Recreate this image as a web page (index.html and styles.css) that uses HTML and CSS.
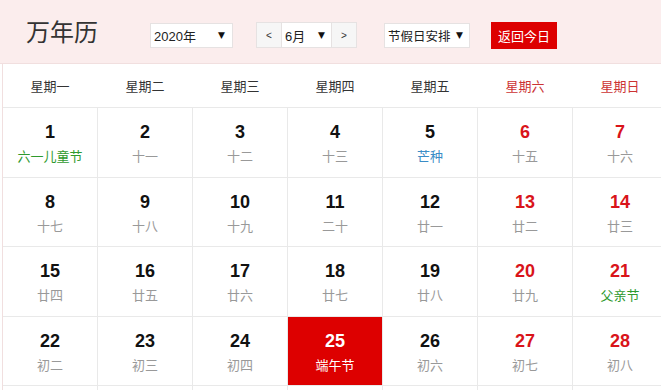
FILE: index.html
```html
<!DOCTYPE html>
<html lang="zh">
<head>
    <meta charset="UTF-8">
    <meta name="viewport" content="width=device-width, initial-scale=1.0">
    <title>万年历</title>
    <link rel="stylesheet" href="styles.css">
</head>
<body>
    <div class="calendar">
        <div class="toolbar">
            <h1 class="title">万年历</h1>
            <div class="select year-select"><span>2020年</span><span class="caret">▼</span></div>
            <div class="month-nav">
                <span class="nav-btn">&lt;</span>
                <div class="select month-select"><span>6月</span><span class="caret">▼</span></div>
                <span class="nav-btn">&gt;</span>
            </div>
            <div class="select holiday-select"><span>节假日安排</span><span class="caret">▼</span></div>
            <button class="today-btn">返回今日</button>
        </div>

        <div class="weekdays">
            <div class="weekday">星期一</div>
            <div class="weekday">星期二</div>
            <div class="weekday">星期三</div>
            <div class="weekday">星期四</div>
            <div class="weekday">星期五</div>
            <div class="weekday weekend">星期六</div>
            <div class="weekday weekend">星期日</div>
        </div>

        <div class="days">
            <div class="day"><div class="num">1</div><div class="lunar festival">六一儿童节</div></div>
            <div class="day"><div class="num">2</div><div class="lunar">十一</div></div>
            <div class="day"><div class="num">3</div><div class="lunar">十二</div></div>
            <div class="day"><div class="num">4</div><div class="lunar">十三</div></div>
            <div class="day"><div class="num">5</div><div class="lunar term">芒种</div></div>
            <div class="day weekend"><div class="num">6</div><div class="lunar">十五</div></div>
            <div class="day weekend"><div class="num">7</div><div class="lunar">十六</div></div>

            <div class="day"><div class="num">8</div><div class="lunar">十七</div></div>
            <div class="day"><div class="num">9</div><div class="lunar">十八</div></div>
            <div class="day"><div class="num">10</div><div class="lunar">十九</div></div>
            <div class="day"><div class="num">11</div><div class="lunar">二十</div></div>
            <div class="day"><div class="num">12</div><div class="lunar">廿一</div></div>
            <div class="day weekend"><div class="num">13</div><div class="lunar">廿二</div></div>
            <div class="day weekend"><div class="num">14</div><div class="lunar">廿三</div></div>

            <div class="day"><div class="num">15</div><div class="lunar">廿四</div></div>
            <div class="day"><div class="num">16</div><div class="lunar">廿五</div></div>
            <div class="day"><div class="num">17</div><div class="lunar">廿六</div></div>
            <div class="day"><div class="num">18</div><div class="lunar">廿七</div></div>
            <div class="day"><div class="num">19</div><div class="lunar">廿八</div></div>
            <div class="day weekend"><div class="num">20</div><div class="lunar">廿九</div></div>
            <div class="day weekend"><div class="num">21</div><div class="lunar festival">父亲节</div></div>

            <div class="day"><div class="num">22</div><div class="lunar">初二</div></div>
            <div class="day"><div class="num">23</div><div class="lunar">初三</div></div>
            <div class="day"><div class="num">24</div><div class="lunar">初四</div></div>
            <div class="day today"><div class="num">25</div><div class="lunar">端午节</div></div>
            <div class="day"><div class="num">26</div><div class="lunar">初六</div></div>
            <div class="day weekend"><div class="num">27</div><div class="lunar">初七</div></div>
            <div class="day weekend"><div class="num">28</div><div class="lunar">初八</div></div>

            <!-- next row starts below the fold -->
            <div class="day"></div>
            <div class="day"></div>
            <div class="day"></div>
            <div class="day"></div>
            <div class="day"></div>
            <div class="day"></div>
            <div class="day"></div>
        </div>
    </div>
</body>
</html>
```

FILE: styles.css
```css
:root {
    --header-bg: #fbeded;
    --header-line: #f1dfdf;
    --grid-line: #e9e9e9;
    --text-color: #333333;
    --lunar-color: #999999;
    --red: #d9141a;
    --today-red: #dd0000;
}
html, body {
    margin: 0;
    padding: 0;
    overflow: hidden;
}
body {
    font-family: "Liberation Sans", Arial, "Noto Sans CJK SC", sans-serif;
    color: var(--text-color);
    background: #ffffff;
}
.calendar {
    width: 666px;
    margin-left: 2px;
    border-left: 1px solid var(--header-line);
}
.toolbar {
    display: flex;
    align-items: center;
    height: 64px;
    margin-left: -3px;
    padding: 7px 0 0 3px;
    box-sizing: border-box;
    background: var(--header-bg);
    border-bottom: 1px solid var(--header-line);
}
.title {
    margin: 0 0 9px 23px;
    font-family: "Noto Sans CJK SC", sans-serif;
    font-size: 24px;
    font-weight: normal;
    line-height: 28px;
    color: #333;
}
.select {
    display: flex;
    align-items: center;
    justify-content: space-between;
    height: 25px;
    box-sizing: border-box;
    padding: 0 7px 0 3px;
    background: #fff;
    border: 1px solid #e6e2e2;
    font-family: "Liberation Sans", "Noto Sans CJK SC", sans-serif;
    font-size: 13px;
    color: #222;
}
.caret {
    font-family: "DejaVu Sans", sans-serif;
    font-size: 9px;
    color: #111;
}
.year-select {
    width: 83px;
    margin-left: 52px;
}
.month-nav {
    display: flex;
    margin-left: 23px;
}
.nav-btn {
    display: flex;
    align-items: center;
    justify-content: center;
    width: 26px;
    height: 26px;
    box-sizing: border-box;
    background: #f6f6f6;
    border: 1px solid #e6e2e2;
    font-size: 10px;
    color: #333;
}
.month-select {
    width: 49px;
    height: 26px;
    border-left: none;
    border-right: none;
    padding: 0 6px 0 3px;
}
.holiday-select {
    width: 86px;
    margin-left: 27px;
    padding-right: 6px;
    font-size: 12.5px;
}
.today-btn {
    margin-left: 21px;
    width: 66px;
    height: 27px;
    padding: 0;
    border: none;
    background: var(--today-red);
    color: #fff;
    font-family: "Noto Sans CJK SC", sans-serif;
    font-size: 13px;
    cursor: pointer;
}
.weekdays {
    display: grid;
    grid-template-columns: repeat(7, 94px);
    column-gap: 1px;
    height: 43px;
    border-bottom: 1px solid var(--grid-line);
}
.weekday {
    display: flex;
    align-items: center;
    justify-content: center;
    font-family: "Noto Sans CJK SC", sans-serif;
    font-size: 13px;
    color: #333;
}
.weekday.weekend {
    color: #cc3333;
}
.days {
    display: grid;
    grid-template-columns: repeat(7, 94px);
    grid-auto-rows: 68.5px;
    gap: 1px;
    background: var(--grid-line);
}
.day {
    background: #fff;
    text-align: center;
    padding-top: 13px;
    box-sizing: border-box;
}
.num {
    font-size: 18px;
    font-weight: bold;
    line-height: 22px;
    color: #111;
}
.lunar {
    margin-top: 4px;
    font-family: "Noto Sans CJK SC", sans-serif;
    font-size: 13px;
    line-height: 18px;
    color: var(--lunar-color);
}
.day.weekend .num {
    color: var(--red);
}
.lunar.festival {
    color: #2f9a2f;
}
.lunar.term {
    color: #3a8cc6;
}
.day.today {
    background: var(--today-red);
}
.day.today .num,
.day.today .lunar {
    color: #fff;
}
```
